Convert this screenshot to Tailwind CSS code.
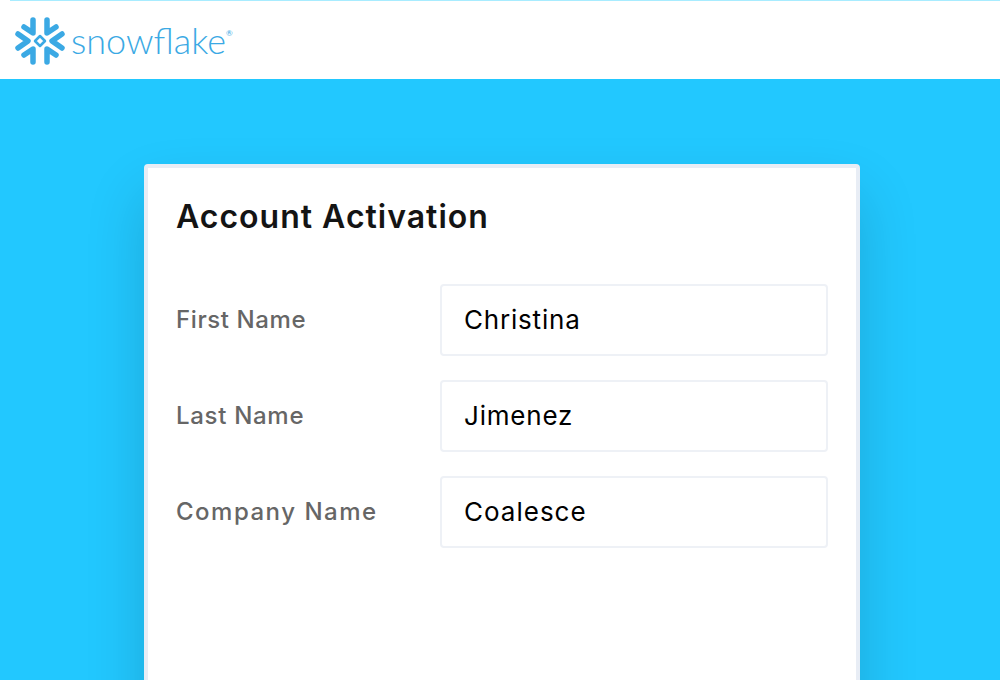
<!DOCTYPE html>
<html lang="en">
<head>
  <meta charset="UTF-8">
  <meta name="viewport" content="width=device-width, initial-scale=1.0">
  <title>Account Activation</title>
  <script src="https://cdn.jsdelivr.net/npm/@tailwindcss/browser@4"></script>
</head>
<body class="h-[680px] overflow-hidden bg-[#22c8ff] font-['Inter',sans-serif]">
  <!-- Header -->
  <header class="h-[79px] bg-white">
    <div class="ml-[10px] h-px bg-[#a8ecff]"></div>
    <div class="flex items-center pl-[15px] pt-[15px]">
      <svg class="h-[50px] w-[50px] shrink-0" viewBox="0 0 50 50" fill="none" stroke="#3ba9e4" stroke-width="5.5" stroke-linecap="round" stroke-linejoin="round">
        <path d="M18 4V17L9 11"/>
        <path d="M32 4V17L41 11"/>
        <path d="M18 46V33L9 39"/>
        <path d="M32 46V33L41 39"/>
        <path d="M3 18L13 25L3 32"/>
        <path d="M47 18L37 25L47 32"/>
        <path d="M25 20L30 25L25 30L20 25Z" stroke-width="2.5"/>
      </svg>
      <span class="mb-[3px] ml-[6px] font-['Lato',sans-serif] text-[36px] leading-[40px] font-light text-[#3ba9e4]">snowflake</span>
      <span class="mb-[16px] font-['Lato',sans-serif] text-[8px] leading-none text-[#3ba9e4]">®</span>
    </div>
  </header>

  <!-- Card -->
  <main class="flex justify-center pt-[85px] pl-[4px]">
    <section class="h-[700px] w-[716px] rounded border-4 border-[#e8edf5] bg-white px-[28px] pt-[26px] shadow-[0_30px_60px_rgba(0,0,0,0.16)]">
      <h1 class="text-[32px] leading-[46px] font-semibold tracking-[1px] text-[#141414]">Account Activation</h1>
      <form class="mt-[44px] flex flex-col gap-6">
        <div class="flex items-center">
          <label class="w-[264px] text-[24px] font-medium tracking-[0.6px] text-[#666666]">First Name</label>
          <input class="h-[72px] w-[388px] rounded border-2 border-[#eef1f6] px-[22px] pb-[2px] text-[26px] tracking-[0.8px] text-black" value="Christina">
        </div>
        <div class="flex items-center">
          <label class="w-[264px] text-[24px] font-medium tracking-[0.7px] text-[#666666]">Last Name</label>
          <input class="h-[72px] w-[388px] rounded border-2 border-[#eef1f6] px-[22px] pb-[2px] text-[26px] tracking-[0.8px] text-black" value="Jimenez">
        </div>
        <div class="flex items-center">
          <label class="w-[264px] text-[24px] font-medium tracking-[1.5px] text-[#666666]">Company Name</label>
          <input class="h-[72px] w-[388px] rounded border-2 border-[#eef1f6] px-[22px] pb-[2px] text-[26px] tracking-[1px] text-black" value="Coalesce">
        </div>
      </form>
    </section>
  </main>
</body>
</html>
